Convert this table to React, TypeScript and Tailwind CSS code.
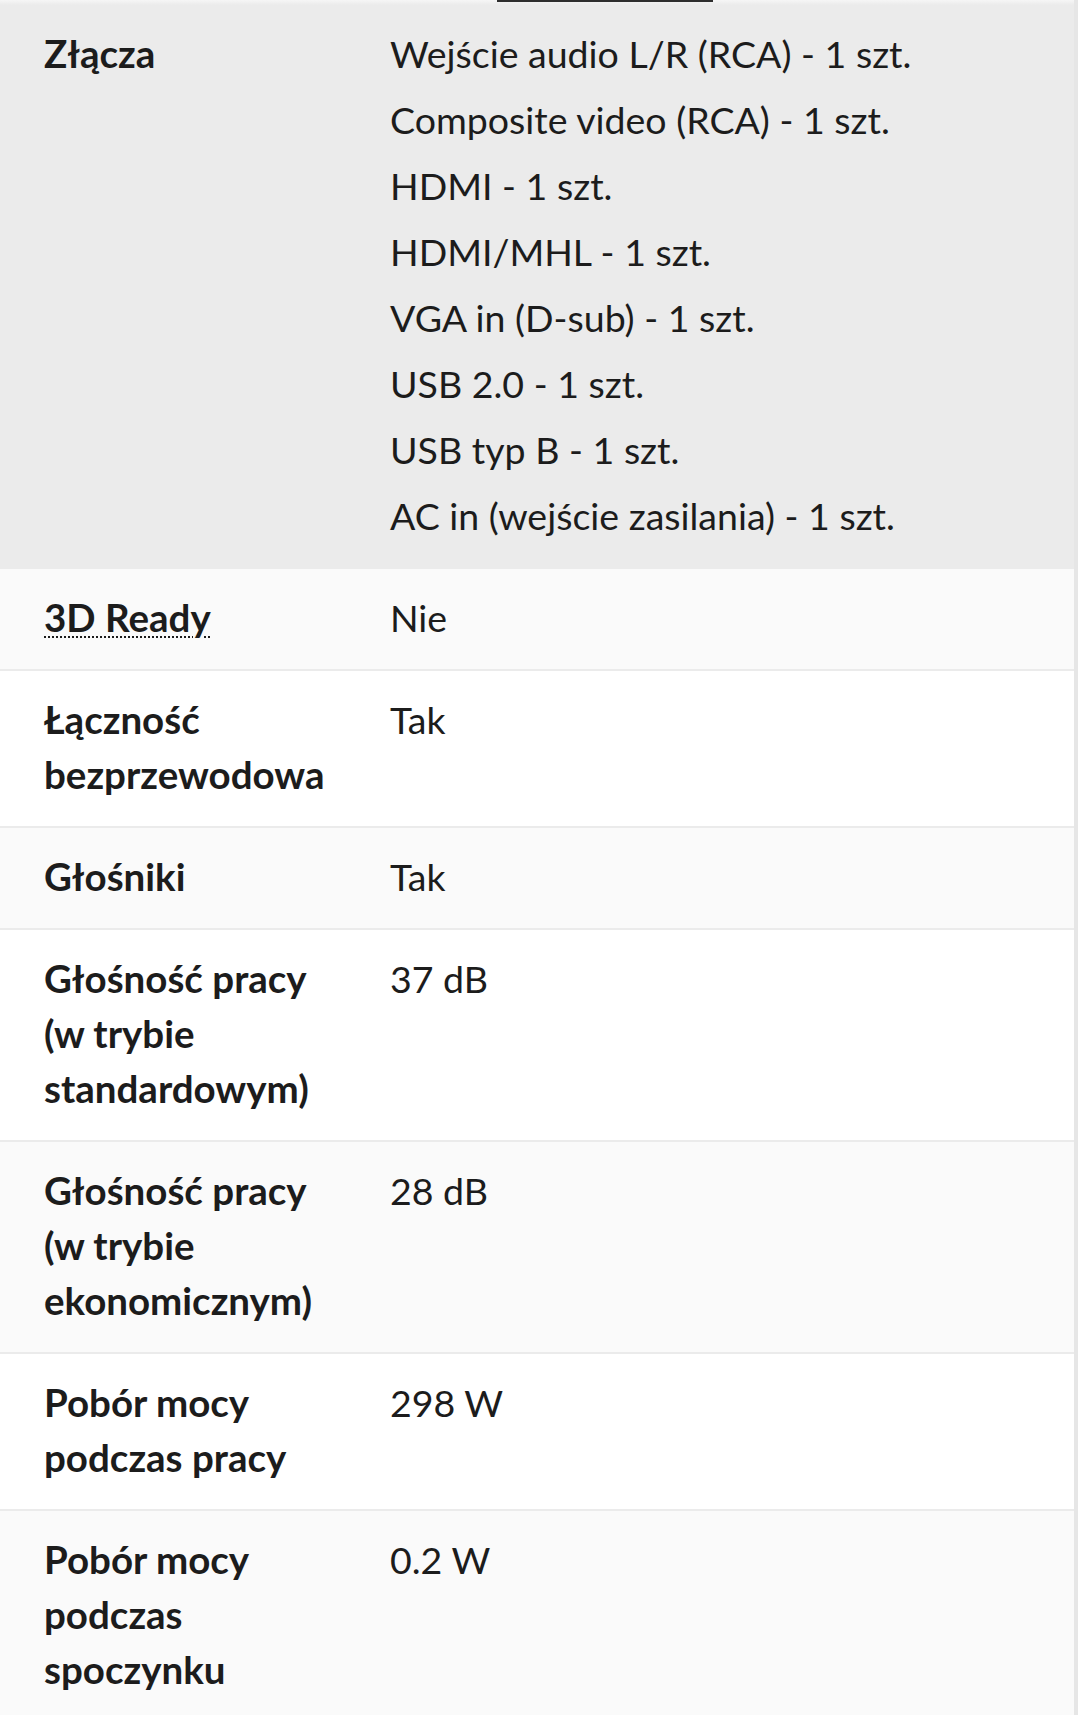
import React from "react";

type Spec = {
  label: string;
  values: string[];
  bg: string;
  hint?: boolean;
};

const specs: Spec[] = [
  {
    label: "Złącza",
    values: [
      "Wejście audio L/R (RCA) - 1 szt.",
      "Composite video (RCA) - 1 szt.",
      "HDMI - 1 szt.",
      "HDMI/MHL - 1 szt.",
      "VGA in (D-sub) - 1 szt.",
      "USB 2.0 - 1 szt.",
      "USB typ B - 1 szt.",
      "AC in (wejście zasilania) - 1 szt.",
    ],
    bg: "bg-[#ebebeb]",
  },
  { label: "3D Ready", values: ["Nie"], bg: "bg-[#fafafa]", hint: true },
  { label: "Łączność bezprzewodowa", values: ["Tak"], bg: "bg-white" },
  { label: "Głośniki", values: ["Tak"], bg: "bg-[#fafafa]" },
  { label: "Głośność pracy (w trybie standardowym)", values: ["37 dB"], bg: "bg-white" },
  { label: "Głośność pracy (w trybie ekonomicznym)", values: ["28 dB"], bg: "bg-[#fafafa]" },
  { label: "Pobór mocy podczas pracy", values: ["298 W"], bg: "bg-white" },
  { label: "Pobór mocy podczas spoczynku", values: ["0.2 W"], bg: "bg-[#fafafa]" },
];

/* single spec row: bold label on the left, one or more values on the right */
const SpecRow: React.FC<{ spec: Spec; last: boolean }> = ({ spec, last }) => (
  <div
    className={`flex pl-[44px] pr-6 pt-[21px] pb-[24px] ${spec.bg} ${
      last ? "" : "border-b-[2px] border-[#ebebeb]"
    }`}
  >
    <div className="w-[285px] shrink-0 font-bold text-[38.5px] leading-[55px]">
      {spec.hint ? (
        <span className="underline decoration-dotted decoration-[2px] underline-offset-[4px]">
          {spec.label}
        </span>
      ) : (
        spec.label
      )}
    </div>
    <div className="ml-[61px] flex flex-col gap-[11px] text-[37.5px] leading-[55px]">
      {spec.values.map((v) => (
        <div key={v}>{v}</div>
      ))}
    </div>
  </div>
);

export default function App() {
  return (
    <div
      className="min-h-[1715px] bg-[#fafafa] text-[#1c1c1c] border-r-[4px] border-[#e6e6e6] overflow-hidden"
      style={{ fontFamily: "Lato, 'Open Sans', sans-serif" }}
    >
      {/* tab strip remnant with active indicator */}
      <div className="h-[5px] bg-gradient-to-b from-[#f6f6f6] to-[#ebebeb] flex">
        <div className="ml-[497px] w-[216px] h-[2px] bg-[#2e2e2e]" />
      </div>

      <div className="flex flex-col">
        {specs.map((s, i) => (
          <SpecRow key={s.label} spec={s} last={i === specs.length - 1} />
        ))}
      </div>
    </div>
  );
}
